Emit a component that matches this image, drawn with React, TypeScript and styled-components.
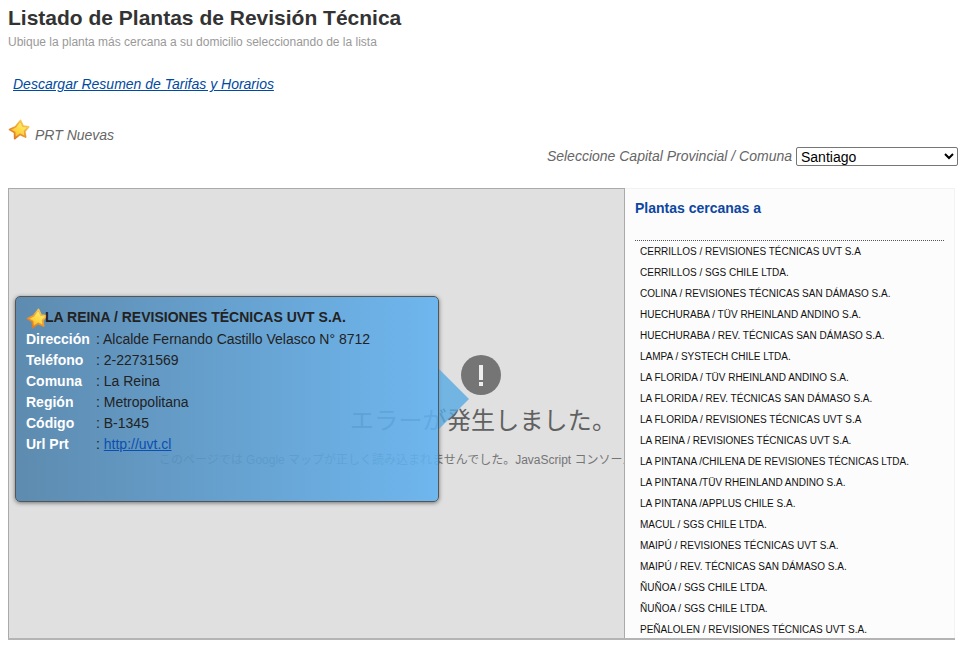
import React from "react";
import styled, { createGlobalStyle } from "styled-components";

const GlobalStyle = createGlobalStyle`
  html, body {
    margin: 0;
    padding: 0;
    background: #fff;
    font-family: "Liberation Sans", Arial, sans-serif;
    overflow: hidden;
  }
`;

const Page = styled.div`
  width: 960px;
  height: 658px;
  padding: 7px 2px 0 8px;
  box-sizing: border-box;
`;

const Title = styled.h1`
  margin: 0;
  font-size: 21px;
  line-height: 22px;
  font-weight: bold;
  color: #333;
`;

const Subtitle = styled.p`
  margin: 5px 0 0;
  font-size: 12px;
  line-height: 16px;
  color: #999;
`;

const DownloadLink = styled.a`
  display: block;
  margin: 25px 0 0 5px;
  font-size: 14px;
  line-height: 18px;
  font-style: italic;
  color: #004a9f;
  text-decoration: underline;
`;

const Legend = styled.div`
  display: flex;
  align-items: flex-start;
  margin-top: 26px;
  height: 27px;
  font-size: 14px;
  font-style: italic;
  color: #666;
`;

const LegendText = styled.span`
  margin: 7px 0 0 5px;
  line-height: 18px;
`;

const Filter = styled.div`
  display: flex;
  justify-content: flex-end;
  align-items: center;
  gap: 4px;
  height: 20px;
  font-size: 14px;
  font-style: italic;
  color: #666;
`;

const Select = styled.select`
  width: 162px;
  height: 19px;
  padding: 0;
  font-family: "Liberation Sans", Arial, sans-serif;
  font-size: 14px;
  font-style: normal;
  color: #000;
  background: #fff;
  border: 1px solid #767676;
  border-radius: 2px;
`;

const Content = styled.div`
  display: flex;
  width: 947px;
  height: 452px;
  margin-top: 22px;
  box-sizing: border-box;
  border-bottom: 2px solid #b4b4b4;
`;

const MapArea = styled.div`
  position: relative;
  width: 617px;
  box-sizing: border-box;
  border: 1px solid #aaa;
  border-bottom: none;
  background: #e0e0e0;
  overflow: hidden;
  display: flex;
  flex-direction: column;
  align-items: center;
  padding-top: 166px;
`;

const ErrorBadge = styled.div`
  width: 40px;
  height: 40px;
  border-radius: 50%;
  background: #757575;
  display: flex;
  flex-direction: column;
  align-items: center;
  margin-left: 328px;
`;

const ErrorBar = styled.span`
  width: 4px;
  height: 15px;
  margin-top: 10px;
  background: #eee;
`;

const ErrorDot = styled.span`
  width: 4px;
  height: 4px;
  margin-top: 2px;
  background: #eee;
`;

const ErrorTitle = styled.div`
  align-self: flex-start;
  margin: 7px 0 0 341px;
  font-family: "Noto Sans CJK JP", sans-serif;
  font-size: 24px;
  line-height: 34px;
  color: #616161;
  white-space: nowrap;
  letter-spacing: 0.2px;
`;

const ErrorDetail = styled.div`
  align-self: flex-start;
  margin: 15px 0 0 150px;
  font-family: "Liberation Sans", "Noto Sans CJK JP", sans-serif;
  font-size: 12px;
  line-height: 18px;
  color: #757575;
  white-space: nowrap;
`;

const InfoBox = styled.div`
  position: absolute;
  left: 6px;
  top: 107px;
  width: 424px;
  height: 206px;
  box-sizing: border-box;
  padding: 12px 10px 0 10px;
  border: 1px solid #555;
  border-radius: 5px;
  background: linear-gradient(to right, rgba(80, 130, 170, 0.9), rgba(98, 178, 240, 0.9));
  box-shadow: 0 1px 4px rgba(0, 0, 0, 0.5);
  font-size: 14px;
  color: #222;
`;

const InfoArrow = styled.div`
  position: absolute;
  left: 430px;
  top: 180px;
  width: 0;
  height: 0;
  border-top: 30px solid transparent;
  border-bottom: 30px solid transparent;
  border-left: 30px solid rgba(88, 170, 226, 0.8);
`;

const InfoTitle = styled.div`
  display: flex;
  align-items: center;
  height: 16px;
  margin-bottom: 4px;
  font-weight: bold;
  color: #222;
  white-space: nowrap;
`;

const TitleStar = styled.span`
  display: flex;
  margin: 4px -3px 0 0;
`;

const InfoRow = styled.div`
  display: flex;
  height: 21px;
  line-height: 21px;
`;

const InfoLabel = styled.span`
  width: 70px;
  font-weight: bold;
  color: #fff;
`;

const InfoValue = styled.span`
  white-space: nowrap;
`;

const InfoLink = styled.a`
  color: #0b4fb0;
  text-decoration: underline;
`;

const Sidebar = styled.aside`
  width: 330px;
  box-sizing: border-box;
  padding: 0 10px;
  background: #fcfcfc;
  border-top: 1px solid #f2f2f2;
  border-right: 1px solid #f2f2f2;
  overflow: hidden;
`;

const SidebarTitle = styled.h2`
  margin: 0;
  height: 52px;
  padding-top: 11px;
  box-sizing: border-box;
  font-size: 14px;
  line-height: 16px;
  font-weight: bold;
  color: #0d47a1;
  border-bottom: 1px dotted #555;
`;

const PlantList = styled.ul`
  list-style: none;
  margin: 0;
  padding: 0 0 0 5px;
`;

const PlantItem = styled.li`
  height: 21px;
  line-height: 21px;
  font-size: 10px;
  color: #111;
  white-space: nowrap;
`;

const Star: React.FC<{ id: string }> = ({ id }) => (
  <svg width="22" height="22" viewBox="0 0 22 22">
    <defs>
      <linearGradient id={`${id}-fill`} x1="0.8" y1="0.1" x2="0.2" y2="0.9">
        <stop offset="0" stopColor="#fff07a" />
        <stop offset="0.6" stopColor="#fcd63f" />
        <stop offset="1" stopColor="#f5b332" />
      </linearGradient>
      <linearGradient id={`${id}-edge`} x1="0.8" y1="0.1" x2="0.2" y2="0.9">
        <stop offset="0" stopColor="#f6cf55" />
        <stop offset="0.5" stopColor="#ef9f35" />
        <stop offset="1" stopColor="#de7a22" />
      </linearGradient>
    </defs>
    <path
      d="M12.5 1.5 L15 7.2 L20.6 7.8 L16.6 12.3 L17.6 18 L12 15.4 L6.8 19.6 L6.6 13.6 L1.6 10.6 L7.6 7.8 Z"
      fill={`url(#${id}-fill)`}
      stroke={`url(#${id}-edge)`}
      strokeWidth="1.8"
      strokeLinejoin="round"
    />
  </svg>
);

const details: [string, string][] = [
  ["Dirección", "Alcalde Fernando Castillo Velasco N° 8712"],
  ["Teléfono", "2-22731569"],
  ["Comuna", "La Reina"],
  ["Región", "Metropolitana"],
  ["Código", "B-1345"],
];

const plants = [
  "CERRILLOS / REVISIONES TÉCNICAS UVT S.A",
  "CERRILLOS / SGS CHILE LTDA.",
  "COLINA / REVISIONES TÉCNICAS SAN DÁMASO S.A.",
  "HUECHURABA / TÜV RHEINLAND ANDINO S.A.",
  "HUECHURABA / REV. TÉCNICAS SAN DÁMASO S.A.",
  "LAMPA / SYSTECH CHILE LTDA.",
  "LA FLORIDA / TÜV RHEINLAND ANDINO S.A.",
  "LA FLORIDA / REV. TÉCNICAS SAN DÁMASO S.A.",
  "LA FLORIDA / REVISIONES TÉCNICAS UVT S.A",
  "LA REINA / REVISIONES TÉCNICAS UVT S.A.",
  "LA PINTANA /CHILENA DE REVISIONES TÉCNICAS LTDA.",
  "LA PINTANA /TÜV RHEINLAND ANDINO S.A.",
  "LA PINTANA /APPLUS CHILE S.A.",
  "MACUL / SGS CHILE LTDA.",
  "MAIPÚ / REVISIONES TÉCNICAS UVT S.A.",
  "MAIPÚ / REV. TÉCNICAS SAN DÁMASO S.A.",
  "ÑUÑOA / SGS CHILE LTDA.",
  "ÑUÑOA / SGS CHILE LTDA.",
  "PEÑALOLEN / REVISIONES TÉCNICAS UVT S.A.",
];

export default function App() {
  return (
    <Page>
      <GlobalStyle />
      <Title>Listado de Plantas de Revisión Técnica</Title>
      <Subtitle>Ubique la planta más cercana a su domicilio seleccionando de la lista</Subtitle>
      <DownloadLink href="#">Descargar Resumen de Tarifas y Horarios</DownloadLink>

      <Legend>
        <Star id="star-legend" />
        <LegendText>PRT Nuevas</LegendText>
      </Legend>

      <Filter>
        Seleccione Capital Provincial / Comuna
        <Select defaultValue="Santiago">
          <option>Santiago</option>
        </Select>
      </Filter>

      <Content>
        <MapArea>
          <ErrorBadge>
            <ErrorBar />
            <ErrorDot />
          </ErrorBadge>
          <ErrorTitle>エラーが発生しました。</ErrorTitle>
          <ErrorDetail>このページでは Google マップが正しく読み込まれませんでした。JavaScript コンソールで技術情報を確認してください。</ErrorDetail>

          <InfoBox>
            <InfoTitle>
              <TitleStar>
                <Star id="star-title" />
              </TitleStar>
              LA REINA / REVISIONES TÉCNICAS UVT S.A.
            </InfoTitle>
            {details.map(([label, value]) => (
              <InfoRow key={label}>
                <InfoLabel>{label}</InfoLabel>
                <InfoValue>: {value}</InfoValue>
              </InfoRow>
            ))}
            <InfoRow>
              <InfoLabel>Url Prt</InfoLabel>
              <InfoValue>
                : <InfoLink href="#">http://uvt.cl</InfoLink>
              </InfoValue>
            </InfoRow>
          </InfoBox>
          <InfoArrow />
        </MapArea>

        <Sidebar>
          <SidebarTitle>Plantas cercanas a</SidebarTitle>
          <PlantList>
            {plants.map((plant, i) => (
              <PlantItem key={i}>{plant}</PlantItem>
            ))}
          </PlantList>
        </Sidebar>
      </Content>
    </Page>
  );
}
